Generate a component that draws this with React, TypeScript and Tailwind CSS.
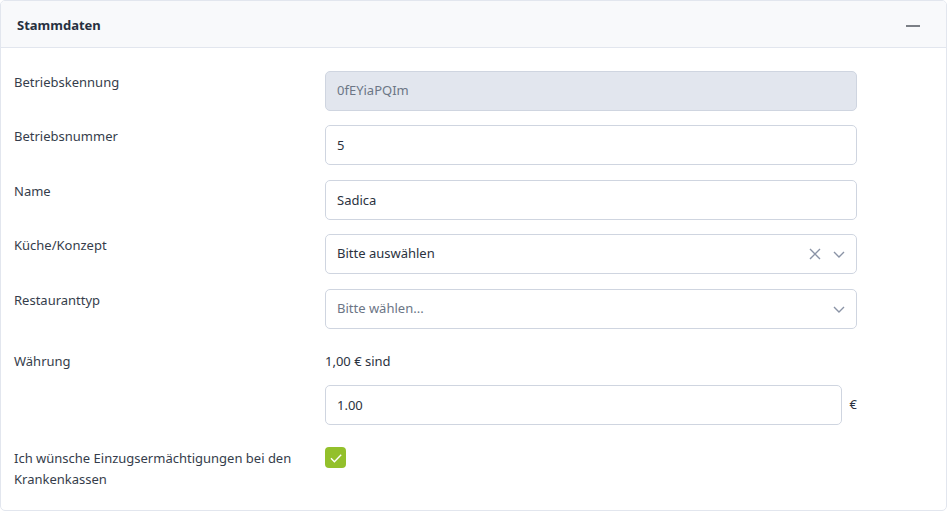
import { useState } from "react";

const font = { fontFamily: '"Noto Sans", "Open Sans", sans-serif' };

function Row({ label, children }: { label: string; children: React.ReactNode }) {
  return (
    <div className="flex">
      <div className="w-[311px] shrink-0 pt-[1px] text-[13px] leading-[21px] text-[#353d4b]">{label}</div>
      <div className="w-[532px]">{children}</div>
    </div>
  );
}

function Chevron() {
  return (
    <svg width="14" height="14" viewBox="0 0 14 14" fill="none" stroke="#8a93a6" strokeWidth="1.4">
      <path d="M2 5l5 5 5-5" />
    </svg>
  );
}

export default function App() {
  const [checked, setChecked] = useState(true);

  return (
    <div className="w-[948px] h-[512px] bg-white" style={font}>
      <div className="w-[947px] h-[511px] border border-[#e2e6ee] rounded-[5px] overflow-hidden">
        <div className="flex items-center justify-between h-[47px] pt-[3px] px-4 bg-[#f8f9fb] border-b border-[#e2e6ee]">
          <h2 className="text-[13px] font-bold text-[#27303f]">Stammdaten</h2>
          <div className="w-[14px] h-[2px] bg-[#7b7f86] mr-[10px]" />
        </div>

        <div className="pl-[13px] pt-[23px] flex flex-col">
          <Row label="Betriebskennung">
            <div className="h-10 flex items-center pl-[11px] rounded-[5px] border border-[#cfd5e0] bg-[#e2e6ee] text-[13px] text-[#6c7686]">
              0fEYiaPQIm
            </div>
          </Row>

          <div className="mt-[14px]">
            <Row label="Betriebsnummer">
              <input
                defaultValue="5"
                className="w-full h-10 pl-[11px] pr-3 rounded-[5px] border border-[#cfd5e0] text-[13px] text-[#2b3240] outline-none"
              />
            </Row>
          </div>

          <div className="mt-[15px]">
            <Row label="Name">
              <input
                defaultValue="Sadica"
                className="w-full h-10 pl-[11px] pr-3 rounded-[5px] border border-[#cfd5e0] text-[13px] text-[#2b3240] outline-none"
              />
            </Row>
          </div>

          <div className="mt-[14px]">
            <Row label="Küche/Konzept">
              <div className="h-10 flex items-center pl-[11px] pr-[10px] rounded-[5px] border border-[#cfd5e0] text-[13px] text-[#2b3240]">
                <span className="flex-1">Bitte auswählen</span>
                <svg width="14" height="14" viewBox="0 0 14 14" fill="none" stroke="#8a93a6" strokeWidth="1.4" className="mr-[10px]">
                  <path d="M2 2l10 10M12 2L2 12" />
                </svg>
                <Chevron />
              </div>
            </Row>
          </div>

          <div className="mt-[15px]">
            <Row label="Restauranttyp">
              <div className="h-10 flex items-center pl-[11px] pr-[10px] rounded-[5px] border border-[#cfd5e0] text-[13px] text-[#6c7686]">
                <span className="flex-1">Bitte wählen...</span>
                <Chevron />
              </div>
            </Row>
          </div>

          <div className="mt-[21px]">
            <Row label="Währung">
              <div className="pt-[1px] text-[13px] leading-[21px] text-[#2b3240]">1,00 € sind</div>
              <div className="mt-[13px] flex items-center">
                <input
                  defaultValue="1.00"
                  className="w-[518px] h-10 pl-[11px] pr-3 rounded-[5px] border border-[#cfd5e0] text-[13px] text-[#2b3240] outline-none"
                />
                <span className="ml-[8px] text-[13px] text-[#2b3240]">€</span>
              </div>
            </Row>
          </div>

          <div className="mt-[22px]">
            <Row label="Ich wünsche Einzugsermächtigungen bei den Krankenkassen">
              <button
                type="button"
                onClick={() => setChecked((c) => !c)}
                className={`w-[21px] h-[21px] rounded-[4px] flex items-center justify-center ${
                  checked ? "bg-[#93c02b]" : "border border-[#cfd5e0] bg-white"
                }`}
              >
                {checked && (
                  <svg width="14" height="14" viewBox="0 0 14 14" fill="none" stroke="white" strokeWidth="1.4">
                    <path d="M2 7.3l3.4 3.4L12.2 3.8" />
                  </svg>
                )}
              </button>
            </Row>
          </div>
        </div>
      </div>
    </div>
  );
}
